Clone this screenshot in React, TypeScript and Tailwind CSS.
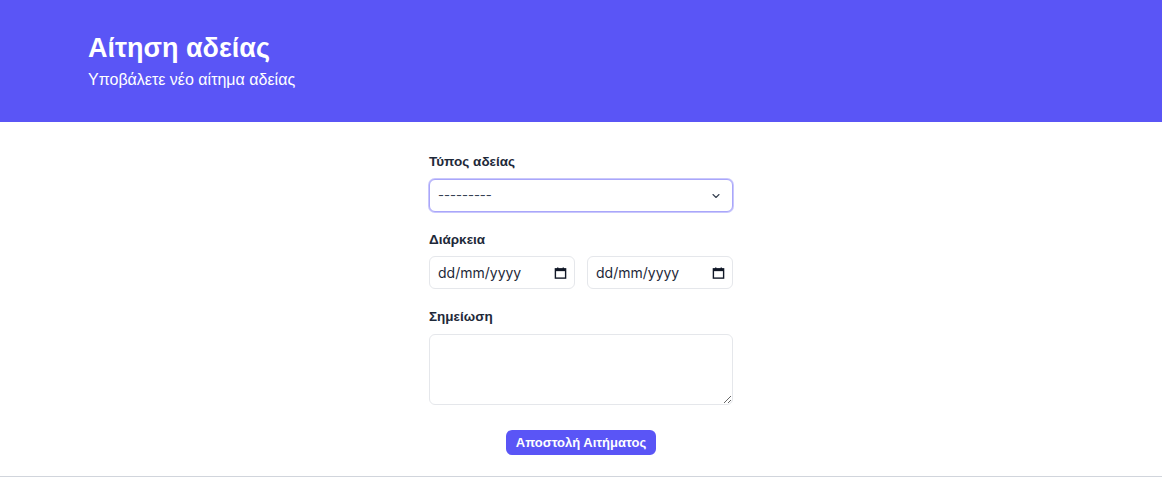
import { useState } from "react";

function Chevron() {
  return (
    <svg width="12" height="12" viewBox="0 0 24 24" fill="none" stroke="#374151" strokeWidth="2.2" strokeLinecap="round" strokeLinejoin="round">
      <path d="m6 9 6 6 6-6" />
    </svg>
  );
}

function CalendarIcon() {
  return (
    <svg width="13" height="13" viewBox="0 0 14 14" fill="none">
      <rect x="1.5" y="2.5" width="11" height="10" stroke="#111827" strokeWidth="1.5" />
      <rect x="1.5" y="2.5" width="11" height="2.5" fill="#111827" />
      <path d="M4 1v2.5M10 1v2.5" stroke="#111827" strokeWidth="1.5" />
    </svg>
  );
}

function DateField() {
  return (
    <div className="relative flex-1">
      <input
        type="text"
        placeholder="dd/mm/yyyy"
        className="h-[33px] w-full rounded-md border border-gray-200 bg-white pl-2 pr-8 font-['Inter',sans-serif] text-sm text-gray-900 placeholder:text-gray-800 outline-none"
      />
      <span className="pointer-events-none absolute right-2 top-1/2 -translate-y-1/2">
        <CalendarIcon />
      </span>
    </div>
  );
}

export default function App() {
  const [type, setType] = useState("");

  return (
    <div className="min-h-[477px] bg-white font-['Liberation_Sans',sans-serif] text-gray-900 border-b border-gray-300">
      <header className="bg-[#5a55f6] px-[88px] pt-[30px] pb-[30px]">
        <h1 className="text-[27px] leading-9 font-bold text-white">Αίτηση αδείας</h1>
        <p className="mt-[2px] text-base leading-6 text-white">Υποβάλετε νέο αίτημα αδείας</p>
      </header>

      <main className="flex justify-center pt-[30px] pb-[21px]">
        <form className="flex w-[304px] flex-col">
          <label className="mb-[7px] text-[13.5px] leading-5 font-bold text-gray-800">Τύπος αδείας</label>
          <div className="relative">
            <select
              value={type}
              onChange={(e) => setType(e.target.value)}
              className="h-[33px] w-full appearance-none rounded-md border border-[#a9a6fa] bg-white pl-2 pr-8 font-['Inter',sans-serif] text-[13px] text-gray-700 outline-none ring-1 ring-[#c9c7fc]"
            >
              <option value="">---------</option>
              <option value="annual">Κανονική άδεια</option>
              <option value="sick">Αναρρωτική άδεια</option>
            </select>
            <span className="pointer-events-none absolute right-[11px] top-1/2 -translate-y-1/2">
              <Chevron />
            </span>
          </div>

          <label className="mt-[18px] mb-[6px] text-[13.5px] leading-5 font-bold text-gray-800">Διάρκεια</label>
          <div className="flex gap-3">
            <DateField />
            <DateField />
          </div>

          <label className="mt-[18px] mb-[7px] text-[13.5px] leading-5 font-bold text-gray-800">Σημείωση</label>
          <textarea className="h-[71px] w-full rounded-md border border-gray-200 bg-white p-2 text-sm outline-none" />

          <div className="mt-[25px] flex justify-center">
            <button
              type="button"
              className="h-[25px] rounded-md bg-[#5a55f6] px-[10px] text-[13px] leading-5 font-bold text-white"
            >
              Αποστολή Αιτήματος
            </button>
          </div>
        </form>
      </main>
    </div>
  );
}
